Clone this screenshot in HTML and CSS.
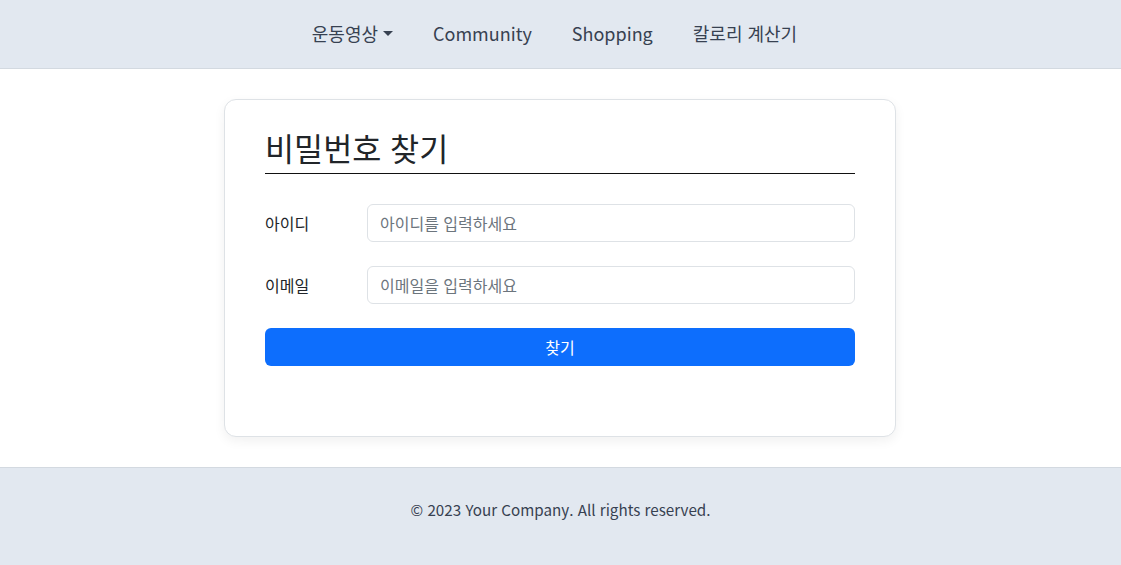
FILE: index.html
```html
<!DOCTYPE html>
<html lang="ko">
<head>
<meta charset="utf-8">
<title>비밀번호 찾기</title>
<link rel="stylesheet" href="styles.css">
</head>
<body>
<header class="topbar">
  <nav class="nav">
    <a class="nav-link dropdown">운동영상<span class="caret"></span></a>
    <a class="nav-link">Community</a>
    <a class="nav-link">Shopping</a>
    <a class="nav-link">칼로리 계산기</a>
  </nav>
</header>
<main class="main">
  <section class="card">
    <h2 class="title">비밀번호 찾기</h2>
    <form class="form">
      <div class="row">
        <label class="label" for="uid">아이디</label>
        <input class="input" id="uid" type="text" placeholder="아이디를 입력하세요">
      </div>
      <div class="row">
        <label class="label" for="mail">이메일</label>
        <input class="input" id="mail" type="email" placeholder="이메일을 입력하세요">
      </div>
      <button class="btn" type="button">찾기</button>
    </form>
  </section>
</main>
<footer class="footer">
  <p>© 2023 Your Company. All rights reserved.</p>
</footer>
</body>
</html>
```
FILE: styles.css
```css
* { box-sizing: border-box; }
html, body { margin: 0; padding: 0; }
body {
  font-family: "Noto Sans CJK KR", "Noto Sans", sans-serif;
  color: #212529;
  background: #fff;
}
.topbar {
  height: 69px;
  background: #e2e8f0;
  border-bottom: 1px solid #d3d9e0;
  display: flex;
  justify-content: center;
  align-items: center;
  padding-bottom: 2px;
}
.nav {
  display: flex;
  gap: 40px;
  align-items: center;
  padding-right: 12px;
}
.nav-link {
  font-size: 18px;
  color: #374151;
  text-decoration: none;
  display: flex;
  align-items: center;
}
.caret {
  display: inline-block;
  margin-left: 5px;
  width: 0;
  height: 0;
  border-left: 5px solid transparent;
  border-right: 5px solid transparent;
  border-top: 5px solid #374151;
}
.main {
  padding: 30px 1px 30px 0;
  display: flex;
  justify-content: center;
}
.card {
  width: 672px;
  height: 338px;
  background: #fff;
  border: 1px solid #dee2e6;
  border-radius: 12px;
  box-shadow: 0 4px 12px rgba(0,0,0,0.06);
  padding: 29px 40px 40px;
}
.title {
  margin: 0 0 30px;
  font-size: 31.6px;
  font-weight: 400;
  line-height: 1.2;
  padding-bottom: 6px;
  border-bottom: 1px solid #111;
  color: #212529;
}
.form {
  display: flex;
  flex-direction: column;
}
.row {
  display: flex;
  align-items: center;
  margin-bottom: 24px;
}
.label {
  width: 102px;
  font-size: 16px;
}
.input {
  flex: 1;
  height: 38px;
  border: 1px solid #dee2e6;
  border-radius: 6px;
  padding: 0 12px;
  font-family: inherit;
  font-size: 16px;
  color: #212529;
}
.input::placeholder { color: #6c757d; }
.btn {
  height: 38px;
  border: none;
  border-radius: 6px;
  background: #0d6efd;
  color: #fff;
  font-family: inherit;
  font-size: 16px;
}
.footer {
  background: #e2e8f0;
  border-top: 1px solid #d3d9e0;
  height: 98px;
  padding-top: 29px;
  text-align: center;
}
.footer p {
  margin: 0;
  font-size: 15.2px;
  line-height: 24px;
  color: #374151;
}
```
